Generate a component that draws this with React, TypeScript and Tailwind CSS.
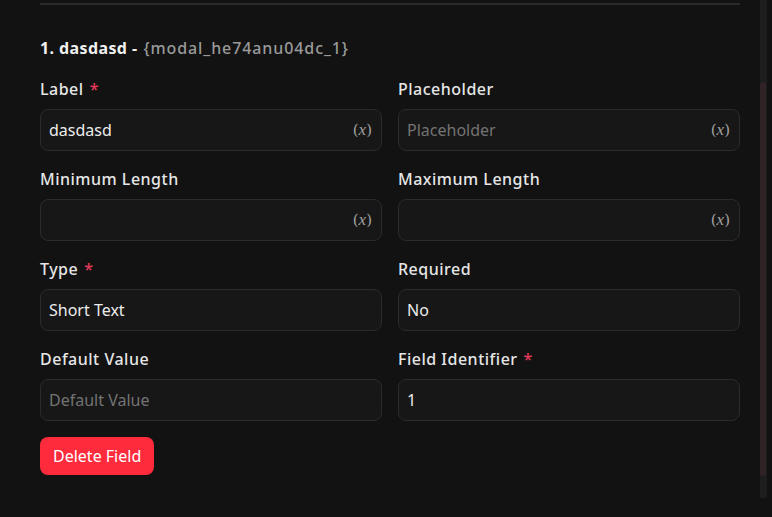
import React from "react";

const VarIcon = () => (
  <span className="pointer-events-none absolute right-[9px] top-1/2 -translate-y-1/2 text-[#a0a0a0] select-none" style={{ fontFamily: '"DejaVu Serif", "Liberation Serif", serif' }}>
    <span className="text-[15px] font-light">(</span>
    <span className="italic" style={{ fontFamily: '"Liberation Serif", serif', fontSize: "17px" }}>x</span>
    <span className="text-[15px] font-light">)</span>
  </span>
);

type FieldProps = {
  label: string;
  required?: boolean;
  value?: string;
  placeholder?: string;
  variable?: boolean;
};

const Field = ({ label, required, value, placeholder, variable }: FieldProps) => (
  <div className="flex flex-col">
    <div className="mb-2 flex h-6 items-center text-[16px] font-medium tracking-[0.5px] text-[#e6e6e6]">
      {label}
      {required && <span className="ml-[6px] text-[#e5395c]">*</span>}
    </div>
    <div className="relative h-[42px] rounded-lg border border-[#2b2b2b] bg-[#171717]">
      <div className="flex h-full items-center px-2 text-[16px]">
        {value ? (
          <span className="text-[#ececec]">{value}</span>
        ) : (
          <span className="text-[#737373]">{placeholder ?? ""}</span>
        )}
      </div>
      {variable && <VarIcon />}
    </div>
  </div>
);

export default function App() {
  return (
    <div
      className="relative h-[517px] w-[772px] overflow-hidden bg-[#121212]"
      style={{ fontFamily: '"Noto Sans", "Open Sans", sans-serif' }}
    >
      <div className="pl-10 pr-8 pt-[3px]">
        <div className="h-[2px] w-full bg-[#2a2a2a]" />
        <div className="mt-[31px] flex h-6 items-center text-[16px]">
          <span className="font-bold tracking-[0.4px] text-[#f0f0f0]">1. dasdasd -</span>
          <span className="ml-[6px] font-medium tracking-[0.9px] text-[#9a9a9a]">{"{modal_he74anu04dc_1}"}</span>
        </div>
        <div className="mt-[17px] grid grid-cols-2 gap-x-4 gap-y-4">
          <Field label="Label" required value="dasdasd" variable />
          <Field label="Placeholder" placeholder="Placeholder" variable />
          <Field label="Minimum Length" variable />
          <Field label="Maximum Length" variable />
          <Field label="Type" required value="Short Text" />
          <Field label="Required" value="No" />
          <Field label="Default Value" placeholder="Default Value" />
          <Field label="Field Identifier" required value="1" />
        </div>
        <div className="mt-4">
          <button className="h-[38px] rounded-lg bg-[#fd2b3b] px-[13px] text-[16px] text-white">
            Delete Field
          </button>
        </div>
      </div>
      <div className="absolute right-[5px] top-0 h-[498px] w-[7px] bg-[#1d1d1d]">
        <div className="mt-[82px] h-[394px] w-[6px] rounded-full bg-[#2f2326]" />
      </div>
    </div>
  );
}
